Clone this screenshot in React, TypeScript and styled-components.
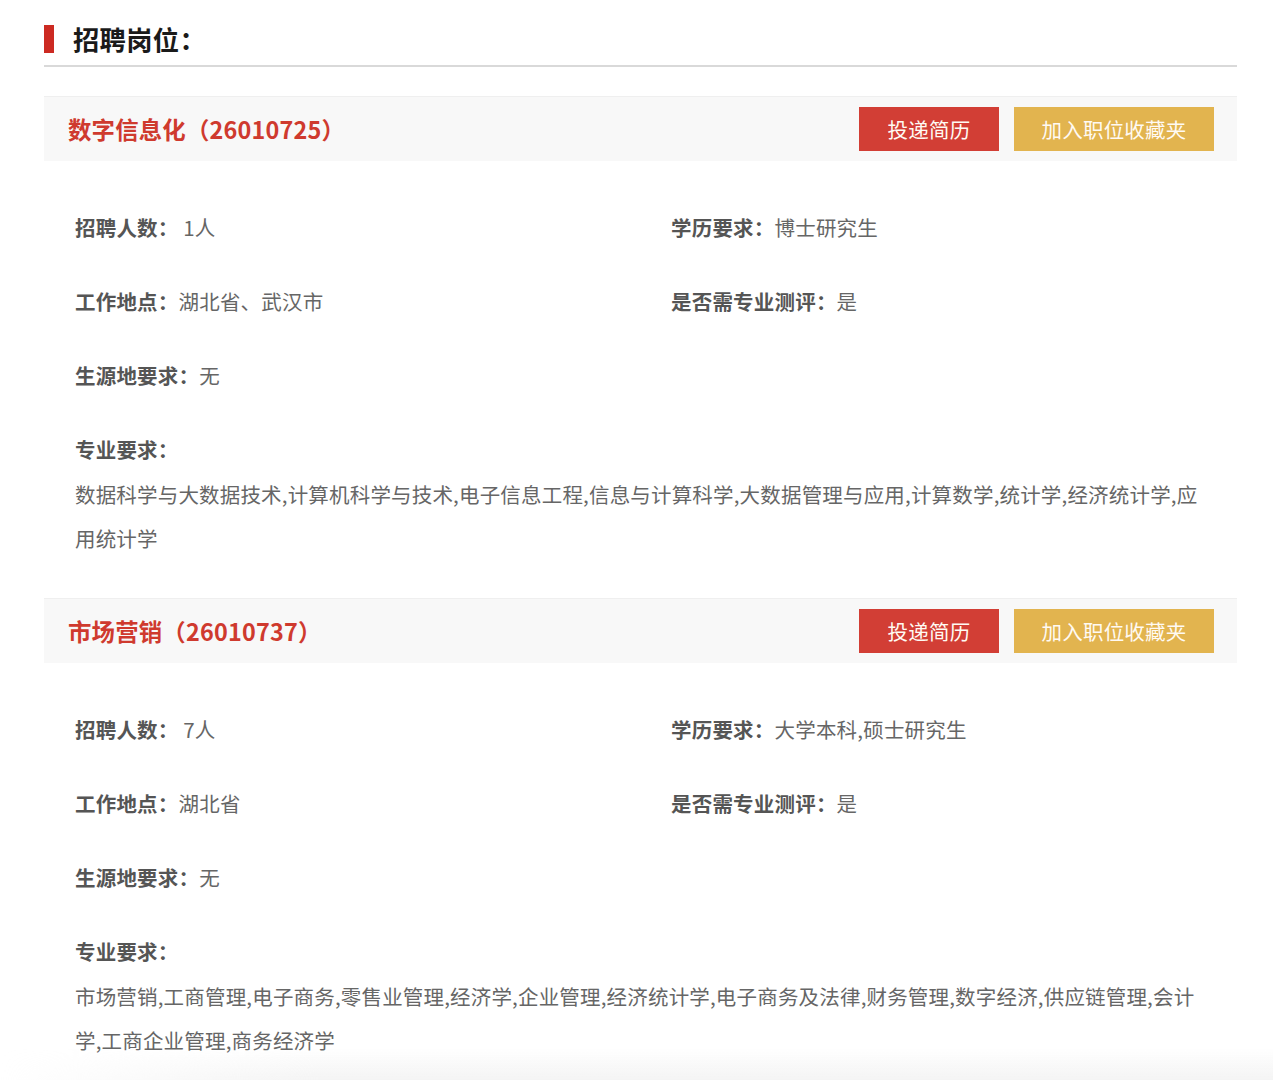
import React from "react";
import styled, { createGlobalStyle } from "styled-components";

const GlobalStyle = createGlobalStyle`
  html, body {
    margin: 0;
    padding: 0;
    background: #ffffff;
  }
  body {
    font-family: "Noto Sans CJK SC", "Noto Sans", sans-serif;
    -webkit-font-smoothing: antialiased;
  }
  * { box-sizing: border-box; }
`;

const Page = styled.div`
  width: 1193px;
  margin-left: 44px;
  padding-top: 25px;
`;

const SectionHead = styled.div`
  display: flex;
  align-items: center;
  gap: 19px;
  height: 28px;
`;

const RedMark = styled.span`
  display: block;
  width: 10px;
  height: 28px;
  background: #cc2a22;
`;

const SectionTitle = styled.h2`
  margin: 0;
  font-size: 26.3px;
  line-height: 28px;
  font-weight: 700;
  color: #1a1a1a;
  letter-spacing: 0.3px;
`;

const Divider = styled.div`
  margin-top: 12px;
  height: 2px;
  background: #d9d9d9;
`;

const JobList = styled.div`
  display: flex;
  flex-direction: column;
  padding-top: 29px;
  gap: 38px;
`;

const JobCard = styled.section``;

const JobHeader = styled.div`
  display: flex;
  align-items: center;
  justify-content: space-between;
  height: 65px;
  padding: 0 23px 0 24px;
  background: #f8f8f8;
  border-top: 1px solid #efefef;
`;

const JobTitle = styled.h3`
  margin: 0;
  font-size: 23.4px;
  font-weight: 700;
  color: #cf3a2e;
  letter-spacing: 0.2px;
`;

const Actions = styled.div`
  display: flex;
  gap: 15px;
`;

const ActionButton = styled.button<{ $tone: "red" | "gold"; $w: number }>`
  width: ${(p) => p.$w}px;
  height: 44px;
  border: none;
  padding: 0 0 1px;
  margin: 0;
  font-family: inherit;
  font-size: 20.5px;
  letter-spacing: 0.2px;
  color: #fffaf3;
  cursor: pointer;
  background: ${(p) => (p.$tone === "red" ? "#d23e35" : "#e2b44f")};
`;

const Details = styled.div`
  padding: 49px 0 0 31px;
`;

const InfoGrid = styled.div`
  display: grid;
  grid-template-columns: 596px 1fr;
  row-gap: 40px;
`;

const InfoItem = styled.div<{ $full?: boolean }>`
  grid-column: ${(p) => (p.$full ? "1 / -1" : "auto")};
  font-size: 20.5px;
  line-height: 34px;
  letter-spacing: 0.2px;
  color: #666666;
  white-space: nowrap;
`;

const Label = styled.span`
  font-weight: 700;
  color: #555555;
`;

const MajorText = styled.p`
  margin: 6px 0 0;
  width: 1132px;
  font-size: 20.5px;
  line-height: 44px;
  letter-spacing: 0.18px;
  color: #666666;
  word-break: break-all;
`;

const BottomShade = styled.div`
  position: fixed;
  left: 0;
  right: 0;
  bottom: 0;
  height: 32px;
  pointer-events: none;
  background: linear-gradient(
    to bottom,
    rgba(235, 235, 235, 0) 0%,
    rgba(235, 235, 235, 0.55) 100%
  );
  -webkit-mask-image: linear-gradient(to right, transparent 0%, #000 25%);
  mask-image: linear-gradient(to right, transparent 0%, #000 25%);
`;

type Job = {
  title: string;
  count: string;
  edu: string;
  place: string;
  test: string;
  origin: string;
  majors: string;
};

const jobs: Job[] = [
  {
    title: "数字信息化（26010725）",
    count: " 1人",
    edu: "博士研究生",
    place: "湖北省、武汉市",
    test: "是",
    origin: "无",
    majors:
      "数据科学与大数据技术,计算机科学与技术,电子信息工程,信息与计算科学,大数据管理与应用,计算数学,统计学,经济统计学,应用统计学",
  },
  {
    title: "市场营销（26010737）",
    count: " 7人",
    edu: "大学本科,硕士研究生",
    place: "湖北省",
    test: "是",
    origin: "无",
    majors:
      "市场营销,工商管理,电子商务,零售业管理,经济学,企业管理,经济统计学,电子商务及法律,财务管理,数字经济,供应链管理,会计学,工商企业管理,商务经济学",
  },
];

function JobBlock({ job }: { job: Job }) {
  return (
    <JobCard>
      <JobHeader>
        <JobTitle>{job.title}</JobTitle>
        <Actions>
          <ActionButton $tone="red" $w={140}>投递简历</ActionButton>
          <ActionButton $tone="gold" $w={200}>加入职位收藏夹</ActionButton>
        </Actions>
      </JobHeader>
      <Details>
        <InfoGrid>
          <InfoItem>
            <Label>招聘人数：</Label>
            {job.count}
          </InfoItem>
          <InfoItem>
            <Label>学历要求：</Label>
            {job.edu}
          </InfoItem>
          <InfoItem>
            <Label>工作地点：</Label>
            {job.place}
          </InfoItem>
          <InfoItem>
            <Label>是否需专业测评：</Label>
            {job.test}
          </InfoItem>
          <InfoItem $full>
            <Label>生源地要求：</Label>
            {job.origin}
          </InfoItem>
          <InfoItem $full>
            <Label>专业要求：</Label>
          </InfoItem>
        </InfoGrid>
        <MajorText>{job.majors}</MajorText>
      </Details>
    </JobCard>
  );
}

export default function App() {
  return (
    <>
      <GlobalStyle />
      <Page>
        <SectionHead>
          <RedMark />
          <SectionTitle>招聘岗位：</SectionTitle>
        </SectionHead>
        <Divider />
        <JobList>
          {jobs.map((j) => (
            <JobBlock key={j.title} job={j} />
          ))}
        </JobList>
      </Page>
      <BottomShade />
    </>
  );
}
